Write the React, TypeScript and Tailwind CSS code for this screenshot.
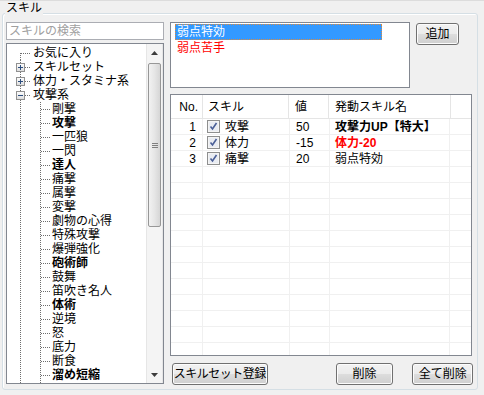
import React from "react";

/* ── Data ───────────────────────────────────────── */
type Node = { label: string; level: 0 | 1; box?: "+" | "-"; bold?: boolean };

const TREE: Node[] = [
  { label: "お気に入り", level: 0 },
  { label: "スキルセット", level: 0, box: "+" },
  { label: "体力・スタミナ系", level: 0, box: "+" },
  { label: "攻撃系", level: 0, box: "-" },
  { label: "剛撃", level: 1 },
  { label: "攻撃", level: 1, bold: true },
  { label: "一匹狼", level: 1 },
  { label: "一閃", level: 1 },
  { label: "達人", level: 1, bold: true },
  { label: "痛撃", level: 1 },
  { label: "属撃", level: 1 },
  { label: "変撃", level: 1 },
  { label: "劇物の心得", level: 1 },
  { label: "特殊攻撃", level: 1 },
  { label: "爆弾強化", level: 1 },
  { label: "砲術師", level: 1, bold: true },
  { label: "鼓舞", level: 1 },
  { label: "笛吹き名人", level: 1 },
  { label: "体術", level: 1, bold: true },
  { label: "逆境", level: 1 },
  { label: "怒", level: 1 },
  { label: "底力", level: 1 },
  { label: "断食", level: 1 },
  { label: "溜め短縮", level: 1, bold: true },
];

const ROWS = [
  { no: 1, skill: "攻撃", val: "50", name: "攻撃力UP【特大】", style: "font-bold text-black" },
  { no: 2, skill: "体力", val: "-15", name: "体力-20", style: "font-bold text-[#ff0000]" },
  { no: 3, skill: "痛撃", val: "20", name: "弱点特効", style: "text-black" },
];

const FONT = "font-['Liberation_Sans','Noto_Sans_CJK_JP',sans-serif]";
const BTN =
  "flex items-center justify-center whitespace-nowrap border border-[#707070] rounded-[3px] bg-[linear-gradient(#f2f2f2_0%,#ebebeb_50%,#dddddd_51%,#cfcfcf_100%)] shadow-[inset_0_0_0_1px_#fcfcfc] text-[12px] leading-none text-black";
const DOT = "#6e6e6e";

/* ── Tree guide lines ───────────────────────────── */
function Guides({ node, first }: { node: Node; first: boolean }) {
  const w = node.level === 0 ? 25 : 44;
  const dot = { stroke: DOT, strokeWidth: 1, strokeDasharray: "1 1", shapeRendering: "crispEdges" as const };
  return (
    <svg width={w} height={14} className="shrink-0">
      <line x1={13.5} y1={first ? 7 : 0} x2={13.5} y2={14} {...dot} />
      {node.level === 0 && <line x1={node.box ? 18 : 14} y1={7.5} x2={24} y2={7.5} {...dot} />}
      {node.level === 1 && (
        <>
          <line x1={33.5} y1={0} x2={33.5} y2={14} {...dot} />
          <line x1={34} y1={7.5} x2={43} y2={7.5} {...dot} />
        </>
      )}
      {node.box && (
        <>
          <defs>
            <linearGradient id="bx" x1="0" y1="0" x2="0" y2="1">
              <stop offset="0" stopColor="#ffffff" />
              <stop offset="1" stopColor="#dcdcdc" />
            </linearGradient>
          </defs>
          <rect x={9.5} y={3.5} width={8} height={8} fill="url(#bx)" stroke="#919191" shapeRendering="crispEdges" />
          <line x1={11} y1={7.5} x2={16} y2={7.5} stroke="#2b4d7e" shapeRendering="crispEdges" />
          {node.box === "+" && <line x1={13.5} y1={5} x2={13.5} y2={10} stroke="#2b4d7e" shapeRendering="crispEdges" />}
        </>
      )}
    </svg>
  );
}

function ScrollBar() {
  return (
    <div className="w-[17px] shrink-0 flex flex-col bg-[#f4f4f4] border-l border-r border-[#e6e6e6]">
      <div className="h-[17px] flex items-center justify-center">
        <svg width="7" height="4"><path d="M3.5 0 L7 4 L0 4 Z" fill="#3c3c3c" /></svg>
      </div>
      <div className="flex-1 flex flex-col pt-[2px] px-[1px]">
        <div className="h-[164px] rounded-[2px] border border-[#979797] bg-[linear-gradient(90deg,#f2f2f2,#e6e6e6_50%,#d6d6d6)] flex items-center justify-center">
          <div className="flex flex-col gap-[1px]">
            <div className="w-[6px] h-px bg-[#7f7f7f]" />
            <div className="w-[6px] h-px bg-[#7f7f7f]" />
            <div className="w-[6px] h-px bg-[#7f7f7f]" />
          </div>
        </div>
      </div>
      <div className="h-[17px] flex items-center justify-center">
        <svg width="7" height="4"><path d="M0 0 L7 0 L3.5 4 Z" fill="#3c3c3c" /></svg>
      </div>
    </div>
  );
}

function CheckBox() {
  return (
    <svg width="13" height="13" className="shrink-0">
      <rect x="0.5" y="0.5" width="12" height="12" fill="#f4f4f4" stroke="#8e8f8f" shapeRendering="crispEdges" />
      <rect x="2" y="2" width="9" height="9" fill="#e9ecf2" />
      <path d="M3.5 6.5 L5.5 9 L9.5 3" fill="none" stroke="#4a5f97" strokeWidth="1.6" />
    </svg>
  );
}

export default function App() {
  return (
    <div className={`${FONT} w-[484px] h-[395px] bg-[#f0f0f0] text-[12px] text-black overflow-hidden relative pt-[12px] pl-[2px] border-t border-[#dcdcdc]`}>
      {/* Group label */}
      <span className="absolute left-[5px] top-0 px-[1px] bg-[#f0f0f0] text-[12px] leading-[14px]">スキル</span>

      <div className="w-[476px] h-[377px] border border-[#d5dfe5] rounded-[3px] shadow-[inset_1px_1px_0_#fff] flex gap-[6px] pl-[3px] pt-[8px]">
        {/* Left: search + tree */}
        <div className="w-[158px] flex flex-col gap-[3px]">
          <div className="h-[18px] border border-[#abadb3] bg-white flex items-center px-[2px] text-[#a0a0a0] leading-none">
            スキルの検索
          </div>
          <div className="h-[341px] border border-[#828790] bg-white flex">
            <div className="flex-1 overflow-hidden pt-[2px]">
              {TREE.map((n, i) => (
                <div key={n.label} className="h-[14px] flex items-center">
                  <Guides node={n} first={i === 0} />
                  <span className={`whitespace-nowrap text-[12px] leading-[12px] pl-[1px] ${n.bold ? "font-bold" : ""}`}>{n.label}</span>
                </div>
              ))}
              <div className="h-[14px] flex items-center">
                <svg width={44} height={14} className="shrink-0">
                  <line x1={13.5} y1={0} x2={13.5} y2={14} stroke={DOT} strokeDasharray="1 1" shapeRendering="crispEdges" />
                  <line x1={33.5} y1={0} x2={33.5} y2={14} stroke={DOT} strokeDasharray="1 1" shapeRendering="crispEdges" />
                </svg>
              </div>
            </div>
            <ScrollBar />
          </div>
        </div>

        {/* Right: list, table, buttons */}
        <div className="w-[303px] flex flex-col">
          <div className="flex gap-[6px]">
            <div className="w-[240px] h-[66px] border border-[#828790] bg-white pt-[1px] pl-[4px]">
              <div className="w-[207px] h-[16px] bg-[#3399ff] text-white outline-1 outline-dotted outline-[#e08a3a] outline-offset-[-1px] leading-[16px] pl-[2px]">
                弱点特効
              </div>
              <div className="h-[16px] text-[#ff0000] leading-[16px] pl-[2px]">弱点苦手</div>
            </div>
            <div className="pt-[1px]">
              <button type="button" className={`${BTN} w-[43px] h-[22px]`}>追加</button>
            </div>
          </div>

          <div className="mt-[6px] h-[262px] w-[302px] border border-[#828790] bg-white overflow-hidden flex flex-col">
            {/* Header */}
            <div className="h-[24px] shrink-0 flex border-b border-[#e5e5e5]">
              <div className="w-[32px] border-r border-[#e5e5e5] flex items-center justify-end pr-[4px]">No.</div>
              <div className="w-[86px] border-r border-[#e5e5e5] flex items-center pl-[5px]">スキル</div>
              <div className="w-[40px] border-r border-[#e5e5e5] flex items-center pl-[6px]">値</div>
              <div className="w-[122px] border-r border-[#e5e5e5] flex items-center pl-[6px]">発動スキル名</div>
              <div className="flex-1" />
            </div>
            {Array.from({ length: 15 }).map((_, i) => {
              const r = ROWS[i];
              return (
                <div key={i} className="h-[16px] shrink-0 flex border-b border-[#f0f0f0] leading-[14px]">
                  <div className="w-[32px] border-r border-[#f0f0f0] flex items-center justify-end pr-[6px]">{r?.no}</div>
                  <div className="w-[87px] border-r border-[#f0f0f0] flex items-center gap-[5px] pl-[4px]">
                    {r && <CheckBox />}
                    {r?.skill}
                  </div>
                  <div className="w-[40px] border-r border-[#f0f0f0] flex items-center pl-[6px]">{r?.val}</div>
                  <div className={`w-[120px] border-r border-[#f0f0f0] flex items-center pl-[5px] whitespace-nowrap ${r?.style ?? ""}`}>{r?.name}</div>
                  <div className="flex-1" />
                </div>
              );
            })}
          </div>

          <div className="mt-[7px] flex items-center">
            <button type="button" className={`${BTN} w-[96px] h-[22px] ml-[2px] text-[11px] tracking-[-0.5px]`}>スキルセット登録</button>
            <button type="button" className={`${BTN} w-[58px] h-[22px] ml-[68px]`}>削除</button>
            <button type="button" className={`${BTN} w-[61px] h-[22px] ml-[19px]`}>全て削除</button>
          </div>
        </div>
      </div>
    </div>
  );
}
